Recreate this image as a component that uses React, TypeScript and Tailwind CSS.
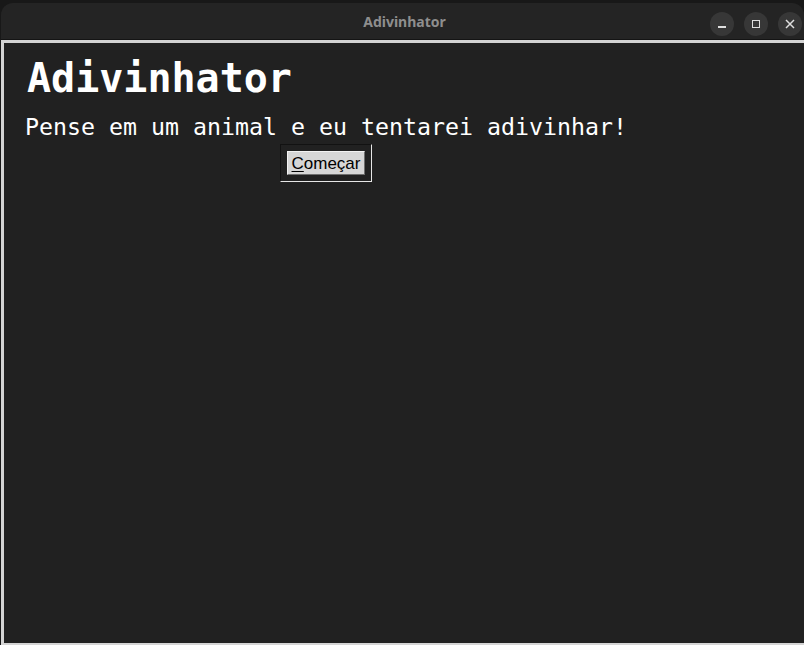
export default function App() {
  return (
    <div className="flex h-[645px] w-[804px] flex-col overflow-hidden bg-[#181818] pl-[1px] pt-[3px]">
      <div className="flex min-h-0 flex-1 flex-col overflow-hidden rounded-tl-[12px] rounded-tr-[12px] bg-[#242424]">
        {/* title bar */}
        <div className="relative flex h-[37px] shrink-0 items-center justify-center border-b border-[#141414]">
          <span className="ml-[4px] font-['Noto_Sans',sans-serif] text-[14px] font-bold text-[#8e8e8e]">
            Adivinhator
          </span>
          <div className="absolute right-[2px] top-[9px] flex gap-[10px]">
            <span className="flex h-[24px] w-[24px] items-center justify-center rounded-full bg-[#373737]">
              <span className="mt-[6px] h-[1.5px] w-[8px] bg-[#dedede]" />
            </span>
            <span className="flex h-[24px] w-[24px] items-center justify-center rounded-full bg-[#373737]">
              <span className="h-[8px] w-[8px] border-[1.5px] border-[#dedede]" />
            </span>
            <span className="flex h-[24px] w-[24px] items-center justify-center rounded-full bg-[#373737]">
              <svg width="10" height="10" viewBox="0 0 10 10">
                <path d="M1 1L9 9M9 1L1 9" stroke="#dedede" strokeWidth="1.5" />
              </svg>
            </span>
          </div>
        </div>
        {/* client area */}
        <div className="flex min-h-0 flex-1 flex-col border-b-2 border-l-[3px] border-t-[3px] border-[#d4d4d4] bg-[#212121] pl-[21px] font-['DejaVu_Sans_Mono',monospace] text-white">
          <h1 className="ml-[2px] mt-[9px] text-[40px] font-bold leading-[52px]">Adivinhator</h1>
          <p className="mt-[9px] text-[23.25px] leading-[28px]">
            Pense em um animal e eu tentarei adivinhar!
          </p>
          <div className="ml-[255px] mt-[3px] flex w-[92px] items-center justify-center border-b border-l border-r border-t border-b-[#e6e6e6] border-l-[#121212] border-r-[#e6e6e6] border-t-[#121212] py-[6px]">
            <button className="flex h-[24px] w-[78px] items-center justify-center border border-b-[#6e6e6e] border-l-[#f2f2f2] border-r-[#6e6e6e] border-t-[#f2f2f2] bg-[#d6d6d6] font-['Liberation_Sans',sans-serif] text-[17px] leading-none text-black">
              <span className="underline decoration-1 underline-offset-2">C</span>omeçar
            </button>
          </div>
        </div>
      </div>
    </div>
  );
}
